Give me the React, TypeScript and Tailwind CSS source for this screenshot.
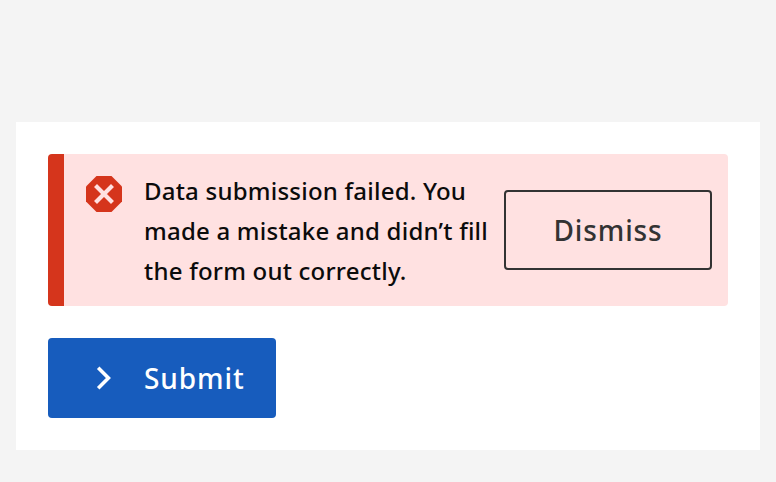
export default function App() {
  return (
    <div className="min-h-[482px] bg-[#f4f4f4] pt-[122px] px-4 pb-8 [font-family:'Noto_Sans','Open_Sans',sans-serif]">
      <div className="bg-white p-8">
        <div className="flex items-center h-[152px] rounded-[4px] overflow-hidden bg-[#ffe1e1] border-l-[16px] border-[#d5351c]">
          <svg className="ml-[22px] mr-[22px] shrink-0 self-start mt-[22px]" width="36" height="36" viewBox="0 0 36 36">
            <polygon points="10.5,0 25.5,0 36,10.5 36,25.5 25.5,36 10.5,36 0,25.5 0,10.5" fill="#d5351c" />
            <path d="M11 11 L25 25 M25 11 L11 25" stroke="#ffe1e1" strokeWidth="4.2" strokeLinecap="square" />
          </svg>
          <p className="w-[360px] shrink-0 pt-[1px] text-[24px] leading-[40px] font-medium tracking-[0.22px] text-[#0b0b0b]">
            Data submission failed. You made a mistake and didn’t fill the form out correctly.
          </p>
          <button className="w-[208px] h-[80px] shrink-0 rounded-[4px] border-2 border-[#333] text-[28px] font-medium tracking-[0.9px] text-[#333] bg-transparent">
            Dismiss
          </button>
        </div>
        <button className="mt-8 w-[228px] h-[80px] rounded-[4px] bg-[#175cbd] text-white flex items-center">
          <svg className="ml-[46px] mr-[30px] shrink-0" width="20" height="28" viewBox="0 0 20 28" fill="none">
            <path d="M4.2 3.8 L14.4 14 L4.2 24.2" stroke="#fff" strokeWidth="3.6" />
          </svg>
          <span className="text-[28px] font-medium tracking-[0.9px]">Submit</span>
        </button>
      </div>
    </div>
  );
}
